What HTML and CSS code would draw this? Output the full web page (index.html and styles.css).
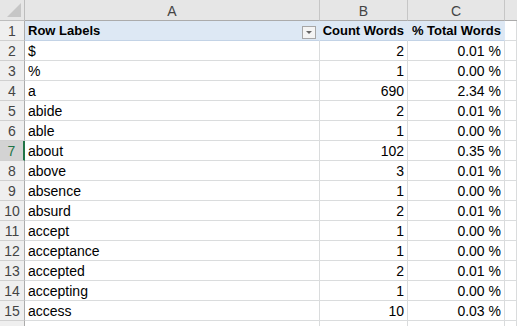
FILE: index.html
```html
<!DOCTYPE html>
<html lang="en">
<head>
    <meta charset="UTF-8">
    <title>Word Count Pivot</title>
    <link rel="stylesheet" href="styles.css">
</head>
<body>
    <div class="sheet">
        <!-- column headers -->
        <div class="corner"><span class="corner-tri"></span></div>
        <div class="col-head">A</div>
        <div class="col-head">B</div>
        <div class="col-head">C</div>
        <div class="col-head last"></div>

        <!-- pivot header row -->
        <div class="row-head">1</div>
        <div class="cell pivot-head label">Row Labels</div>
        <div class="cell pivot-head num"><span class="filter-btn"><span class="filter-arrow"></span></span>Count Words</div>
        <div class="cell pivot-head num">% Total Words</div>
        <div class="cell"></div>

        <div class="row-head">2</div>
        <div class="cell label">$</div>
        <div class="cell num">2</div>
        <div class="cell num">0.01 %</div>
        <div class="cell"></div>

        <div class="row-head">3</div>
        <div class="cell label">%</div>
        <div class="cell num">1</div>
        <div class="cell num">0.00 %</div>
        <div class="cell"></div>

        <div class="row-head">4</div>
        <div class="cell label">a</div>
        <div class="cell num">690</div>
        <div class="cell num">2.34 %</div>
        <div class="cell"></div>

        <div class="row-head">5</div>
        <div class="cell label">abide</div>
        <div class="cell num">2</div>
        <div class="cell num">0.01 %</div>
        <div class="cell"></div>

        <div class="row-head">6</div>
        <div class="cell label">able</div>
        <div class="cell num">1</div>
        <div class="cell num">0.00 %</div>
        <div class="cell"></div>

        <div class="row-head active">7</div>
        <div class="cell label">about</div>
        <div class="cell num">102</div>
        <div class="cell num">0.35 %</div>
        <div class="cell"></div>

        <div class="row-head">8</div>
        <div class="cell label">above</div>
        <div class="cell num">3</div>
        <div class="cell num">0.01 %</div>
        <div class="cell"></div>

        <div class="row-head">9</div>
        <div class="cell label">absence</div>
        <div class="cell num">1</div>
        <div class="cell num">0.00 %</div>
        <div class="cell"></div>

        <div class="row-head">10</div>
        <div class="cell label">absurd</div>
        <div class="cell num">2</div>
        <div class="cell num">0.01 %</div>
        <div class="cell"></div>

        <div class="row-head">11</div>
        <div class="cell label">accept</div>
        <div class="cell num">1</div>
        <div class="cell num">0.00 %</div>
        <div class="cell"></div>

        <div class="row-head">12</div>
        <div class="cell label">acceptance</div>
        <div class="cell num">1</div>
        <div class="cell num">0.00 %</div>
        <div class="cell"></div>

        <div class="row-head">13</div>
        <div class="cell label">accepted</div>
        <div class="cell num">2</div>
        <div class="cell num">0.01 %</div>
        <div class="cell"></div>

        <div class="row-head">14</div>
        <div class="cell label">accepting</div>
        <div class="cell num">1</div>
        <div class="cell num">0.00 %</div>
        <div class="cell"></div>

        <div class="row-head">15</div>
        <div class="cell label">access</div>
        <div class="cell num">10</div>
        <div class="cell num">0.03 %</div>
        <div class="cell"></div>

        <div class="row-head"></div>
        <div class="cell"></div>
        <div class="cell"></div>
        <div class="cell"></div>
        <div class="cell"></div>
    </div>
</body>
</html>
```

FILE: styles.css
```css
* {
    margin: 0;
    padding: 0;
    box-sizing: border-box;
}

body {
    font-family: "Liberation Sans", Arial, sans-serif;
    background: white;
    overflow: hidden;
}

.sheet {
    display: grid;
    grid-template-columns: 25px 295px 88px 97px 12px;
    grid-template-rows: 21px;
    grid-auto-rows: 20px;
    width: 517px;
}

.corner,
.col-head,
.row-head {
    background: #e6e6e6;
    color: #444;
    font-size: 14px;
    border-right: 1px solid #bdbdbd;
    border-bottom: 1px solid #bdbdbd;
}

.corner {
    position: relative;
}

.corner-tri {
    position: absolute;
    right: 3px;
    bottom: 3px;
    width: 0;
    height: 0;
    border-left: 14px solid transparent;
    border-bottom: 14px solid #c6c6c6;
}

.col-head {
    display: flex;
    align-items: center;
    justify-content: center;
    padding-top: 1px;
    border-right-color: #c6c6c6;
    border-bottom-color: #ababab;
}

.col-head.last {
    border-right: none;
}

.row-head {
    display: flex;
    align-items: flex-end;
    justify-content: center;
    padding-bottom: 1px;
    background: #efefef;
    border-bottom-color: #d0d0d0;
    border-right-color: #ababab;
}

.row-head.active {
    background: #d3d3d3;
    color: #217346;
    border-right: 2px solid #217346;
}

.cell {
    position: relative;
    display: flex;
    align-items: flex-end;
    padding: 0 2px 1px 3px;
    font-size: 14px;
    color: #000;
    white-space: nowrap;
    border-right: 1px solid #dadcdd;
    border-bottom: 1px solid #dadcdd;
}

.cell.num {
    justify-content: flex-end;
    padding-right: 3px;
}

.pivot-head {
    font-size: 13px;
    padding-bottom: 2px;
    background: #dde8f4;
    font-weight: bold;
    border-right-color: #dde8f4;
    border-bottom-color: #c3d3e6;
}

.filter-btn {
    position: absolute;
    left: -18px;
    top: 5px;
    width: 14px;
    height: 13px;
    border: 1px solid #a6a6a6;
    background: #f4f4f4;
}

.filter-arrow {
    position: absolute;
    left: 3px;
    top: 4px;
    width: 0;
    height: 0;
    border-left: 3px solid transparent;
    border-right: 3px solid transparent;
    border-top: 3px solid #666;
}
```
